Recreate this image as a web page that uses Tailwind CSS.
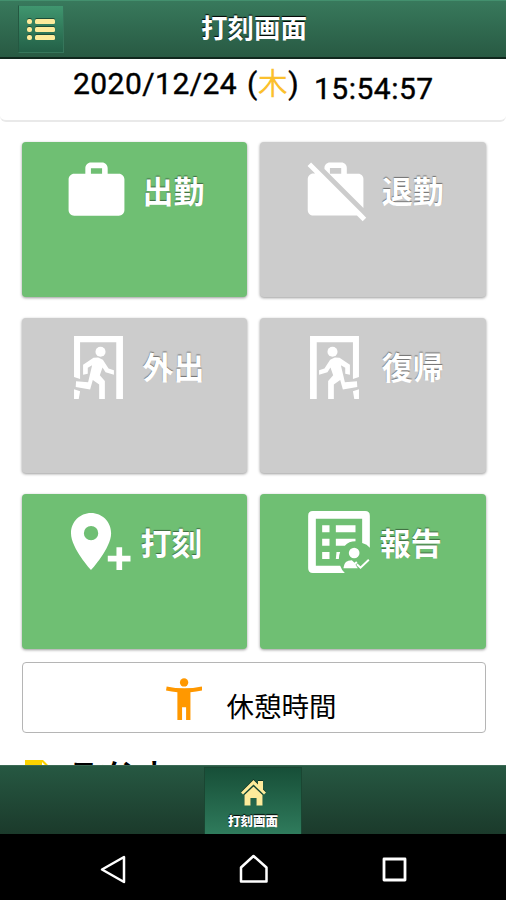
<!DOCTYPE html>
<html lang="ja">
<head>
  <meta charset="UTF-8">
  <meta name="viewport" content="width=device-width, initial-scale=1.0">
  <title>打刻画面</title>
  <script src="https://cdn.jsdelivr.net/npm/@tailwindcss/browser@4"></script>
</head>
<body class="h-[900px] w-[506px] flex flex-col overflow-hidden bg-white text-black font-['Roboto','Noto_Sans_CJK_JP',sans-serif]">

  <!-- Header -->
  <header class="h-[59px] shrink-0 grid grid-cols-[1fr_auto_1fr] items-start border-t border-[#43906e] border-b-2 border-b-[#10271d] bg-linear-to-b from-[#38795c] to-[#285a43]">
    <button class="ml-[18px] mt-1 h-[48px] w-[46px] flex items-center justify-center border border-[#36765b] border-l-[#245841] bg-linear-to-b from-[#40966f] to-[#236047]">
      <svg class="w-7 h-[21px] drop-shadow-[0_-1px_0_#1b4d37]" viewBox="0 0 28 21" fill="#fdeb9b">
        <rect x="0" y="0" width="5" height="5" rx="2"/><rect x="8" y="0" width="20" height="5" rx="1.5"/>
        <rect x="0" y="8" width="5" height="5" rx="2"/><rect x="8" y="8" width="20" height="5" rx="1.5"/>
        <rect x="0" y="16" width="5" height="5" rx="2"/><rect x="8" y="16" width="20" height="5" rx="1.5"/>
      </svg>
    </button>
    <h1 class="mt-[8px] ml-[2px] text-[26.5px] leading-10 font-bold text-white [text-shadow:0_-1px_1px_#000]">打刻画面</h1>
  </header>

  <!-- Date and time -->
  <section class="h-[63px] shrink-0 flex items-start pl-[73px] rounded-b-md border-b-2 border-[#e9e9e9] text-[30px] leading-9 whitespace-nowrap [-webkit-text-stroke:0.4px]">
    <p class="mt-[7px] w-[241px] tracking-[0.45px]">2020/12/24 <span class="ml-[2px]">(</span><span class="text-[#fbc02d] [-webkit-text-stroke:0px]">木</span>)</p>
    <p class="mt-[12px] tracking-[0.5px]">15:54:57</p>
  </section>

  <main class="h-[643px] shrink-0 overflow-hidden pt-[19.5px] pl-[21.5px]">
    <!-- Punch buttons -->
    <div class="w-[464px] grid grid-cols-2 gap-x-[13.5px] gap-y-[20.5px] text-[31px] leading-10 font-bold text-white">
      <button class="h-[155.5px] flex items-start rounded bg-[#6fbf73] pl-[41.5px] shadow-[0_1px_3px_rgba(0,0,0,0.4)]">
        <svg class="mt-[15.5px] size-[67px]" viewBox="0 0 24 24" fill="currentColor"><path d="M20 6h-4V4c0-1.11-.89-2-2-2h-4c-1.11 0-2 .89-2 2v2H4c-1.11 0-1.99.89-1.99 2L2 19c0 1.11.89 2 2 2h16c1.11 0 2-.89 2-2V8c0-1.11-.89-2-2-2zm-6 0h-4V4h4v2z"/></svg>
        <span class="mt-[31px] ml-[12.5px] [text-shadow:0_-1px_1px_rgba(0,0,0,0.45)]">出勤</span>
      </button>
      <button class="h-[155.5px] flex items-start rounded bg-[#ccc] pl-[42px] shadow-[0_1px_3px_rgba(0,0,0,0.4)]">
        <svg class="mt-[15.5px] size-[67px]" viewBox="0 0 24 24" fill="currentColor"><path d="M23 21.74l-1.46-1.46L7.21 5.95 3.25 1.99 1.99 3.25l2.7 2.7h-.64c-1.11 0-1.99.89-1.99 2l-.01 11c0 1.11.89 2 2 2h15.64L21.74 23 23 21.74zM22 7.95c.05-1.11-.84-2-1.95-1.95h-4V3.95c0-1.11-.89-2-2-1.95h-4c-1.11-.05-2 .84-2 1.95v.32l13.95 14V7.95zM14.05 6H10V3.95h4.05V6z"/></svg>
        <span class="mt-[31px] ml-[12.5px] [text-shadow:0_-1px_1px_rgba(0,0,0,0.45)]">退勤</span>
      </button>
      <button class="h-[155.5px] flex items-start rounded bg-[#ccc] pl-[52.5px] shadow-[0_1px_3px_rgba(0,0,0,0.4)]">
        <svg class="mt-[18px] w-[49px] h-[63px]" viewBox="178 77 146 188" fill="currentColor">
          <path d="M178 77H324V265H304V96H196V205L178 199ZM178 236L196 242L192 265H178Z"/>
          <circle cx="257" cy="124" r="15"/>
          <path d="M236 142L205 163V193L219 190V172L232 164L220 215L184 212L183 229L226 237L234 208L253 222V265H270V211L255 194L263 171L272 185L297 193V179L281 174L264 148L250 141Z"/>
        </svg>
        <span class="mt-[31px] ml-[19.5px] [text-shadow:0_-1px_1px_rgba(0,0,0,0.45)]">外出</span>
      </button>
      <button class="h-[155.5px] flex items-start rounded bg-[#ccc] pl-[50px] shadow-[0_1px_3px_rgba(0,0,0,0.4)]">
        <svg class="mt-[18px] w-[49px] h-[63px] -scale-x-100" viewBox="178 77 146 188" fill="currentColor">
          <path d="M178 77H324V265H304V96H196V205L178 199ZM178 236L196 242L192 265H178Z"/>
          <circle cx="257" cy="124" r="15"/>
          <path d="M236 142L205 163V193L219 190V172L232 164L220 215L184 212L183 229L226 237L234 208L253 222V265H270V211L255 194L263 171L272 185L297 193V179L281 174L264 148L250 141Z"/>
        </svg>
        <span class="mt-[31px] ml-[22.5px] [text-shadow:0_-1px_1px_rgba(0,0,0,0.45)]">復帰</span>
      </button>
      <button class="h-[155.5px] flex items-start rounded bg-[#6fbf73] pl-[49.5px] shadow-[0_1px_3px_rgba(0,0,0,0.4)]">
        <svg class="mt-[19.5px] w-[59.5px] h-[57px]" viewBox="168 84 178 170" fill="currentColor">
          <path fill-rule="evenodd" d="M228 84C194.500 84 168 110.500 168 144C168 189 228 254 228 254S288 189 288 144C288 110.500 261.500 84 228 84ZM228 165.500A21.500 21.500 0 1 1 228 122.500A21.500 21.500 0 1 1 228 165.500Z"/>
          <path d="M304 186H321V212H346V229H321V254H304V229H278V212H304Z"/>
        </svg>
        <span class="mt-[31px] ml-[10px] [text-shadow:0_-1px_1px_rgba(0,0,0,0.45)]">打刻</span>
      </button>
      <button class="h-[155.5px] flex items-start rounded bg-[#6fbf73] pl-[47.5px] shadow-[0_1px_3px_rgba(0,0,0,0.4)]">
        <svg class="mt-[17px] w-[62px] h-[62px]" viewBox="158 76 185 186" fill="currentColor">
          <path d="M172 76H329Q343 76 343 90V186Q335 176 320 172V99H181V240H254Q258 252 268 262H172Q158 262 158 248V90Q158 76 172 76Z"/>
          <path d="M200 119H222V140H200ZM241 119H300V140H241ZM200 159H222V180H200ZM241 159H300V167Q280 167 268 180H241ZM200 199H222V220H200ZM243 199H254Q250 209 250 220H241Z"/>
          <circle cx="296" cy="202" r="16"/>
          <path d="M264 246Q266 224 289 224L297 231L302 227L306 231L300 237L307 248H264Z"/>
          <path d="M304 236L315 246L340 222" fill="none" stroke="currentColor" stroke-width="6"/>
        </svg>
        <span class="mt-[31px] ml-[10px] [text-shadow:0_-1px_1px_rgba(0,0,0,0.45)]">報告</span>
      </button>
    </div>

    <!-- Break time -->
    <button class="mt-[13px] h-[71px] w-[464px] flex items-start rounded-[4px] border-[1.5px] border-[#b5b5b5] pl-[143px]">
      <svg class="mt-[14.500px] w-[36.500px] h-[42px]" viewBox="497 84 109 125" fill="#ff9800">
        <circle cx="551" cy="97" r="12.500"/>
        <path d="M499 109Q551 120 604 109L606 121Q588 125 570 126V209H557V171H545V209H531V126Q514 125 497 121Z"/>
      </svg>
      <span class="mt-[25px] ml-[24.5px] text-[27.5px] leading-10">休憩時間</span>
    </button>

    <!-- Comments -->
    <div class="mt-[24px] pl-[3px] flex items-start">
      <svg class="mt-[2.500px] size-[26px]" viewBox="0 0 26 26" fill="#fbd300"><path d="M0 0H18L26 8V26H0ZM17 2V9H24Z"/></svg>
      <h2 class="-mt-[3px] ml-[20px] text-[25.5px] leading-9 font-bold tracking-[-0.8px]">コメント</h2>
    </div>
  </main>

  <!-- Tab bar -->
  <footer class="h-[69px] shrink-0 flex justify-center border-t border-[#3b6a55] bg-linear-to-b from-[#265842] to-[#1b3a2b]">
    <a class="mt-px w-[98px] flex flex-col items-center border border-b-0 border-[#1a4632] bg-linear-to-b from-[#174f38] to-[#2f7b5c]">
      <svg class="mt-[12px] w-[25px] h-[26px] drop-shadow-[0_-1px_0_#0d3324]" viewBox="0 0 25 26" fill="#fdeb9b">
        <path d="M0 12.500L12.500 0L17 4.500V1H22V9.500L25 12.500L23 14.500L12.500 4.500L2 14.500Z"/>
        <path d="M3.500 15L12.500 6.500L21.500 15V25.500H15.500V18H9.500V25.500H3.500Z"/>
      </svg>
      <span class="mt-[6px] text-[12.5px] leading-5 font-black text-white [text-shadow:0_-1px_1px_#000]">打刻画面</span>
    </a>
  </footer>

  <!-- Android navigation -->
  <nav class="h-[66px] shrink-0 flex items-start bg-black pl-[100px] pt-[20px]">
    <svg class="w-7 h-8" viewBox="0 0 28 32" fill="none" stroke="#fff" stroke-width="2.500" stroke-linejoin="round"><path d="M2 15.500L24 3V28Z"/></svg>
    <svg class="ml-[111px] w-[30px] h-8" viewBox="0 0 30 32" fill="none" stroke="#fff" stroke-width="2.500" stroke-linejoin="round"><path d="M2 27.500V13.500L14.500 2L27.500 13.500V27.500Z"/></svg>
    <svg class="ml-[112px] w-[28px] h-8" viewBox="0 0 28 32" fill="none" stroke="#fff" stroke-width="2.800" stroke-linejoin="round"><rect x="3" y="5" width="21" height="21"/></svg>
  </nav>
</body>
</html>
